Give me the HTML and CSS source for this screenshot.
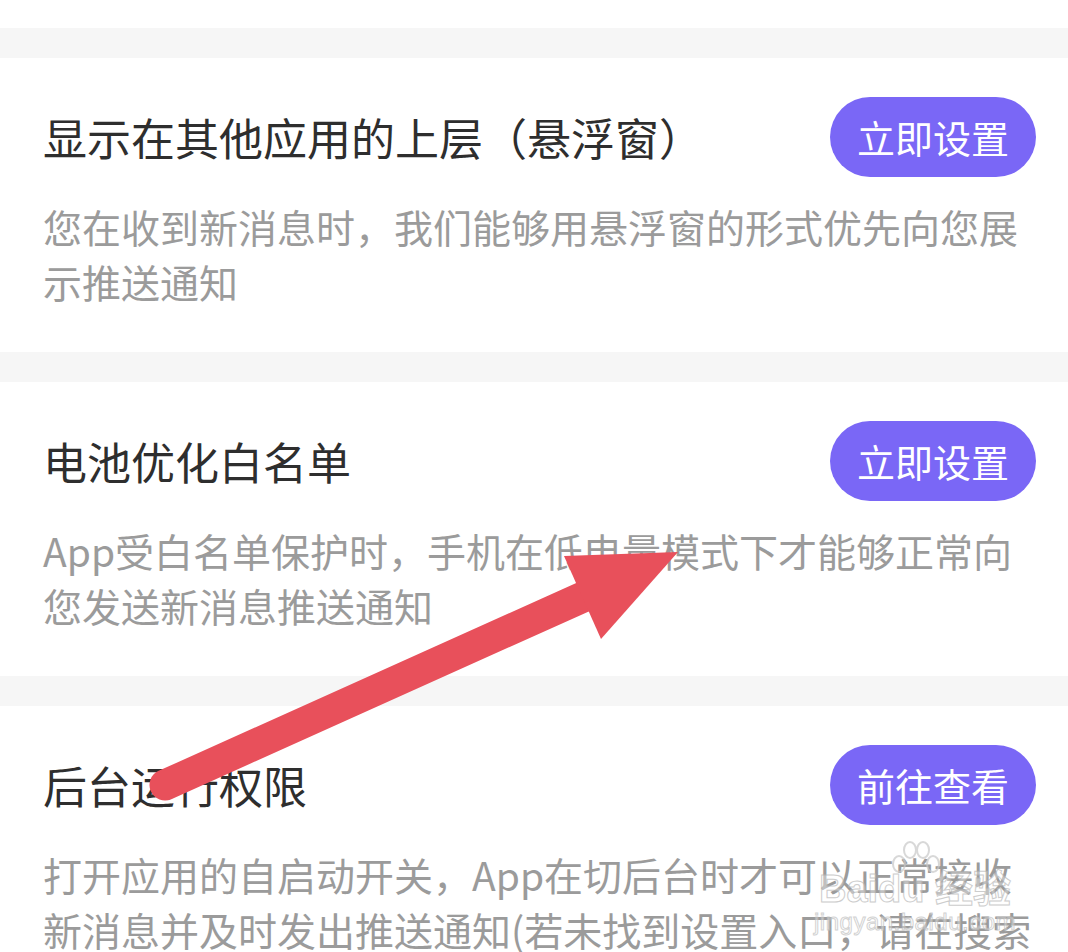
FILE: index.html
```html
<!DOCTYPE html>
<html lang="zh-CN">
<head>
	<meta charset="UTF-8">
	<meta name="viewport" content="width=device-width, initial-scale=1.0">
	<title>通知设置</title>
	<link rel="stylesheet" href="styles.css">
</head>
<body>
	<div class="topgap"></div>
	<div class="band"></div>

	<div class="item">
		<div class="item-row">
			<span class="item-title">显示在其他应用的上层（悬浮窗）</span>
			<button class="btn">立即设置</button>
		</div>
		<p class="item-desc">您在收到新消息时，我们能够用悬浮窗的形式优先向您展示推送通知</p>
	</div>
	<div class="band"></div>

	<div class="item">
		<div class="item-row">
			<span class="item-title">电池优化白名单</span>
			<button class="btn">立即设置</button>
		</div>
		<p class="item-desc">App受白名单保护时，手机在低电量模式下才能够正常向您发送新消息推送通知</p>
	</div>
	<div class="band"></div>

	<div class="item">
		<div class="item-row">
			<span class="item-title">后台运行权限</span>
			<button class="btn">前往查看</button>
		</div>
		<p class="item-desc">打开应用的自启动开关，App在切后台时才可以正常接收新消息并及时发出推送通知(若未找到设置入口，请在搜索栏中查找)</p>
	</div>

	<!-- annotation arrow drawn over the screenshot -->
	<svg class="arrow" width="1068" height="952" viewBox="0 0 1068 952">
		<line x1="165" y1="785" x2="612" y2="584" stroke="#e8505b" stroke-width="31" stroke-linecap="round"/>
		<polygon points="564,556 678,552 601,639" fill="#e8505b"/>
	</svg>

	<div class="watermark">
		<svg class="paw" width="60" height="44" viewBox="0 0 60 44">
			<ellipse cx="14" cy="24" rx="6" ry="8" fill="none" stroke="#c8c8c8" stroke-width="2"/>
			<ellipse cx="25" cy="10" rx="6" ry="8" fill="none" stroke="#c8c8c8" stroke-width="2"/>
			<ellipse cx="38" cy="10" rx="6" ry="8" fill="none" stroke="#c8c8c8" stroke-width="2"/>
			<ellipse cx="48" cy="24" rx="6" ry="8" fill="none" stroke="#c8c8c8" stroke-width="2"/>
		</svg>
		<div class="wm-big">Baidu 经验</div>
		<div class="wm-small">jingyan.baidu.com</div>
	</div>
</body>
</html>
```

FILE: styles.css
```css
* {
	padding:		0;
	margin:			0;
	box-sizing:		border-box;
}

body {
	background-color:	#ffffff;
	font-family:		"Noto Sans CJK SC", "Noto Sans", sans-serif;
	color:			#2b2b2b;
	width:			1068px;
	position:		relative;
	overflow:		hidden;
}

.topgap {
	height:			28px;
}

.band {
	height:			30px;
	background:		#f6f6f6;
}

.item {
	padding:		39px 32px 43px 43px;
}

.item-row {
	display:		flex;
	align-items:		center;
	justify-content:	space-between;
	height:			80px;
}

.item-title {
	font-size:		44px;
	line-height:		1;
	color:			#2e2e2e;
}

.btn {
	background-color:	#7a67f6;
	color:			#ffffff;
	font-family:		inherit;
	font-size:		38px;
	line-height:		80px;
	height:			80px;
	width:			206px;
	border:			none;
	border-radius:		40px;
	text-align:		center;
}

.item-desc {
	margin-top:		22px;
	font-size:		39px;
	line-height:		55px;
	color:			#9b9b9b;
}

.arrow {
	position:		absolute;
	top:			0;
	left:			0;
	pointer-events:		none;
}

.watermark {
	position:		absolute;
	left:			815px;
	top:			840px;
	width:			200px;
	display:		flex;
	flex-direction:		column;
	align-items:		center;
	white-space:		nowrap;
	pointer-events:		none;
	opacity:		0.7;
}

.paw {
	margin-bottom:		-14px;
}

.wm-big {
	font-family:		"Liberation Sans", "Noto Sans CJK SC", sans-serif;
	font-size:		38px;
	font-weight:		bold;
	line-height:		1;
	color:			rgba(255, 255, 255, 0.55);
	-webkit-text-stroke:	1px #b8b8b8;
}

.wm-small {
	font-family:		"Liberation Sans", sans-serif;
	font-size:		24px;
	line-height:		1.2;
	color:			rgba(255, 255, 255, 0.6);
	-webkit-text-stroke:	1px #c0c0c0;
	letter-spacing:		0.5px;
}
```
